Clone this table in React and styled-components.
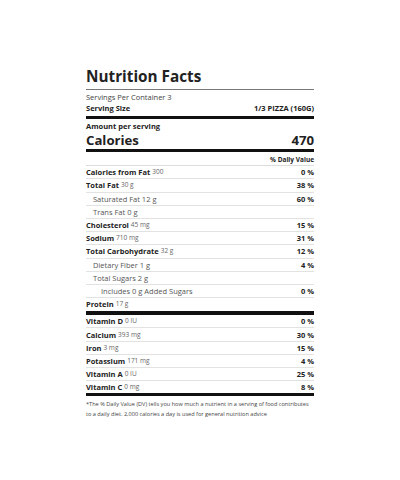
import React from "react";
import styled, { createGlobalStyle } from "styled-components";

const Global = createGlobalStyle`
  html, body { margin: 0; padding: 0; background: #fff; }
  body { font-family: "Open Sans", "Liberation Sans", sans-serif; }
`;

const Label = styled.div`
  width: 228px;
  margin: 66px auto 0;
  font-family: "Open Sans", "Liberation Sans", sans-serif;
  color: #222;
`;

const Title = styled.h1`
  margin: 0;
  font-size: 15.3px;
  font-weight: 700;
  line-height: 20px;
  padding-bottom: 3px;
  border-bottom: 1px solid #777;
  color: #222;
`;

const Line = styled.div`
  display: flex;
  justify-content: space-between;
  align-items: baseline;
  font-size: ${(p) => p.$size || 7.5}px;
  line-height: ${(p) => p.$lh || 11}px;
  font-weight: ${(p) => (p.$bold ? 700 : 400)};
  color: ${(p) => (p.$bold ? "#222" : "#444")};
`;

const Servings = styled.div`
  padding-top: 2px;
`;

const Bar = styled.div`
  height: ${(p) => p.$h}px;
  background: #111;
  margin-top: ${(p) => p.$mt || 0}px;
`;

const Amount = styled.div`
  padding-top: 2px;
`;

const DVHeader = styled.div`
  text-align: right;
  font-size: 6.5px;
  font-weight: 700;
  line-height: 11px;
  padding-top: 2px;
  border-bottom: 1px solid #ddd;
  color: #222;
`;

const Row = styled.div`
  display: flex;
  justify-content: space-between;
  align-items: center;
  height: 12.2px;
  padding-left: ${(p) => p.$indent || 0}px;
  border-bottom: ${(p) => (p.$last ? "none" : "1px solid #e2e2e2")};
  font-size: 7.5px;
`;

const Name = styled.span`
  font-weight: ${(p) => (p.$bold ? 700 : 400)};
  color: ${(p) => (p.$bold ? "#222" : "#555")};
`;

const Qty = styled.span`
  font-size: 6.5px;
  font-weight: 400;
  color: #666;
  margin-left: 2px;
  position: relative;
  top: -1px;
`;

const Pct = styled.span`
  font-weight: 700;
  color: #222;
`;

const Footnote = styled.p`
  margin: 3px 0 0;
  font-size: 5.6px;
  line-height: 10px;
  color: #444;
`;

const nutrients = [
  { name: "Calories from Fat", qty: "300", pct: "0 %", bold: true },
  { name: "Total Fat", qty: "30 g", pct: "38 %", bold: true },
  { name: "Saturated Fat 12 g", pct: "60 %", indent: 7 },
  { name: "Trans Fat 0 g", pct: "", indent: 7 },
  { name: "Cholesterol", qty: "45 mg", pct: "15 %", bold: true },
  { name: "Sodium", qty: "710 mg", pct: "31 %", bold: true },
  { name: "Total Carbohydrate", qty: "32 g", pct: "12 %", bold: true },
  { name: "Dietary Fiber 1 g", pct: "4 %", indent: 7 },
  { name: "Total Sugars 2 g", pct: "", indent: 7 },
  { name: "Includes 0 g Added Sugars", pct: "0 %", indent: 15 },
  { name: "Protein", qty: "17 g", pct: "", bold: true, last: true },
];

const vitamins = [
  { name: "Vitamin D", qty: "0 IU", pct: "0 %" },
  { name: "Calcium", qty: "393 mg", pct: "30 %" },
  { name: "Iron", qty: "3 mg", pct: "15 %" },
  { name: "Potassium", qty: "171 mg", pct: "4 %" },
  { name: "Vitamin A", qty: "0 IU", pct: "25 %" },
  { name: "Vitamin C", qty: "0 mg", pct: "8 %", last: true },
];

function NutrientRow({ n, bold }) {
  return (
    <Row $indent={n.indent} $last={n.last}>
      <span>
        <Name $bold={bold ?? n.bold}>{n.name}</Name>
        {n.qty && <Qty>{n.qty}</Qty>}
      </span>
      <Pct>{n.pct}</Pct>
    </Row>
  );
}

export default function App() {
  return (
    <>
      <Global />
      <Label>
        <Title>Nutrition Facts</Title>
        <Servings>
          <Line>Servings Per Container 3</Line>
          <Line $bold>
            <span>Serving Size</span>
            <span>1/3 PIZZA (160G)</span>
          </Line>
        </Servings>
        <Bar $h={3} $mt={2} />
        <Amount>
          <Line $bold $lh={10.2}>Amount per serving</Line>
          <Line $bold $size={13.2} $lh={18}>
            <span>Calories</span>
            <span>470</span>
          </Line>
        </Amount>
        <Bar $h={3} $mt={0} />
        <DVHeader>% Daily Value</DVHeader>
        {nutrients.map((n) => (
          <NutrientRow key={n.name} n={n} />
        ))}
        <Bar $h={4} $mt={1} />
        {vitamins.map((n) => (
          <NutrientRow key={n.name} n={n} bold />
        ))}
        <Bar $h={3} $mt={0} />
        <Footnote>
          *The % Daily Value (DV) tells you how much a nutrient in a serving of food contributes to a daily diet. 2,000 calories a day is used for general nutrition advice
        </Footnote>
      </Label>
    </>
  );
}
